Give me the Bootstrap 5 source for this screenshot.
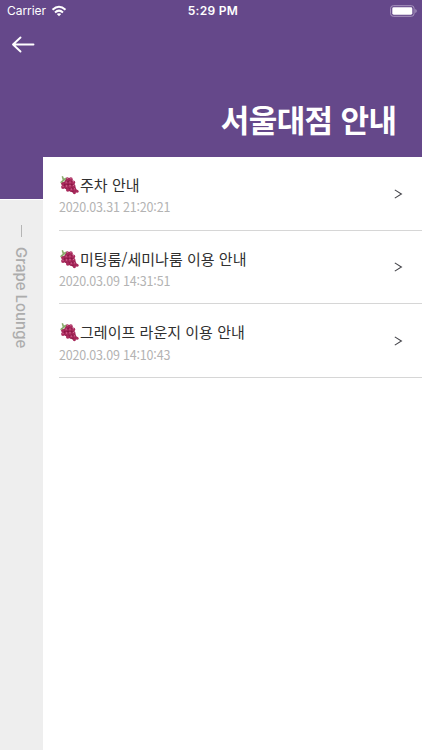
<!DOCTYPE html>
<html lang="ko">
<head>
<meta charset="utf-8">
<meta name="viewport" content="width=device-width, initial-scale=1">
<title>서울대점 안내</title>
<link href="https://cdn.jsdelivr.net/npm/bootstrap@5.3.0/dist/css/bootstrap.min.css" rel="stylesheet">
<style>
  body { font-family: "Noto Sans CJK KR", sans-serif; color: #303030; }
  .app-header { height: 157px; background: #65488a; }
  .status-bar { height: 22px; font-family: Inter, sans-serif; font-size: 12px; line-height: 22px; padding: 0 5px 0 7px; }
  .status-side { flex: 1 1 0; }
  .carrier { letter-spacing: -.04px; }
  .wifi { margin-left: 5px; }
  .clock { letter-spacing: .3px; padding-left: 2px; }
  .back-btn { margin: 13px 0 0 11px; width: 24px; height: 20px; }
  .page-title { font-size: 31px; line-height: 40px; font-weight: 700; letter-spacing: -.6px; padding: 0 25.6px 18px 0; }
  .side-rail { width: 43px; background: #eee; }
  .rail-top { height: 43px; background: #65488a; border-bottom: 1px solid #fff; }
  .rail-line { width: 1px; height: 12px; background: #b5b5b5; margin: 25px 0 10px 21px; }
  .rail-text { writing-mode: vertical-rl; font-family: Inter, sans-serif; font-size: 15px; line-height: 18px; font-weight: 500; color: #acacac; margin-left: 12px; letter-spacing: 0; }
  .notice { height: 73.6px; margin-left: 16px; border-bottom: 1px solid #d6d6d6; color: inherit; }
  .notice-title { font-size: 15px; line-height: 22px; letter-spacing: .03px; padding-top: 17px; }
  .notice-date { font-size: 12.5px; line-height: 18px; letter-spacing: -.18px; color: #b3b3b3; margin-top: 2.4px; }
  .grape { width: 20px; height: 20px; margin-right: 1px; }
  .chevron { width: 10px; height: 12px; margin: 1px 19px 0 0; }
</style>
<script src="https://cdn.jsdelivr.net/npm/bootstrap@5.3.0/dist/js/bootstrap.bundle.min.js"></script>
</head>
<body class="bg-white">
<svg class="d-none">
  <symbol id="grapes" viewBox="0 0 20 20">
    <path d="M3.5 10L7 4L11 3L14 6L16 11L18 16L15 18L10 16L5 13Z" fill="#841442"/>
    <g fill="#a82a5c"><circle cx="3.8" cy="8.6" r="1.8"/><circle cx="8.3" cy="4.2" r="1.9"/><circle cx="11.8" cy="4.2" r="1.9"/><circle cx="7.2" cy="7.8" r="1.9"/><circle cx="11" cy="7.8" r="1.9"/><circle cx="14.3" cy="7.4" r="1.9"/><circle cx="4" cy="12" r="1.9"/><circle cx="7.5" cy="11.7" r="1.9"/><circle cx="11" cy="11.5" r="1.9"/><circle cx="14.6" cy="11.1" r="1.9"/><circle cx="8.8" cy="14.9" r="1.8"/><circle cx="12.3" cy="14.9" r="1.8"/><circle cx="15.6" cy="14.5" r="1.8"/><circle cx="18.1" cy="16.2" r="1.5"/><circle cx="15.4" cy="17.6" r="1.6"/></g>
    <g fill="#d4709a"><circle cx="8.4" cy="3.5" r=".6"/><circle cx="11.9" cy="3.6" r=".6"/><circle cx="7.2" cy="7.1" r=".7"/><circle cx="11" cy="7.1" r=".7"/><circle cx="14.4" cy="6.7" r=".6"/><circle cx="4" cy="11.3" r=".6"/><circle cx="7.5" cy="11" r=".7"/><circle cx="11" cy="10.8" r=".7"/><circle cx="14.6" cy="10.4" r=".6"/><circle cx="12.3" cy="14.2" r=".6"/><circle cx="15.6" cy="13.8" r=".6"/></g>
    <path d="M2.6 1.6L4 1L5 3.6Q6.5 2.3 7.6 3Q6.8 5.4 5 6Q3.8 8 1.2 8.2Q1 6.2 3.6 5Z" fill="#8aab6c"/>
  </symbol>
  <symbol id="chevron" viewBox="0 0 10 12"><path d="M1.8 1.9L8.4 6L1.8 10.1" fill="none" stroke="#44444a" stroke-width="1.1"/></symbol>
</svg>
<div class="d-flex flex-column vh-100 overflow-hidden">
  <header class="app-header text-white d-flex flex-column flex-shrink-0">
    <div class="status-bar d-flex align-items-center">
      <div class="status-side d-flex align-items-center">
        <span class="carrier">Carrier</span>
        <svg class="wifi" width="16" height="12" viewBox="0 0 16 12" fill="none" stroke="#fff" stroke-width="2"><path d="M1.5 4.8Q8 -1.2 14.5 4.8M4 7.4Q8 3.8 12 7.4"/><path d="M5.8 9Q8 7.3 10.2 9L8 11.3Z" fill="#fff" stroke="none"/></svg>
      </div>
      <span class="clock fw-semibold">5:29 PM</span>
      <div class="status-side d-flex justify-content-end">
        <svg width="27" height="12" viewBox="0 0 27 12"><rect x=".6" y=".7" width="23.5" height="10.6" rx="2.7" fill="none" stroke="#a997bf"/><rect x="2.3" y="2.3" width="20" height="7.4" rx="1.4" fill="#fff"/><path d="M25.3 4Q26.7 4.5 26.7 6T25.3 8Z" fill="#a997bf"/></svg>
      </div>
    </div>
    <a href="#" class="back-btn d-block" aria-label="뒤로"><svg class="d-block" width="24" height="20" viewBox="0 0 24 20" fill="none" stroke="#fff" stroke-width="1.9" stroke-linecap="round" stroke-linejoin="round"><path d="M22.5 9.5H2M9.5 2.5L2 9.5L9.5 16.5"/></svg></a>
    <h1 class="page-title text-end mt-auto mb-0">서울대점 안내</h1>
  </header>
  <div class="d-flex flex-grow-1">
    <aside class="side-rail flex-shrink-0">
      <div class="rail-top"></div>
      <div class="rail-line"></div>
      <div class="rail-text">Grape Lounge</div>
    </aside>
    <main class="flex-grow-1">
      <a href="#" class="notice d-flex align-items-center text-decoration-none">
        <div class="flex-grow-1 align-self-start"><div class="notice-title d-flex align-items-center"><svg class="grape"><use href="#grapes"/></svg>주차 안내</div><div class="notice-date">2020.03.31 21:20:21</div></div>
        <svg class="chevron"><use href="#chevron"/></svg>
      </a>
      <a href="#" class="notice d-flex align-items-center text-decoration-none">
        <div class="flex-grow-1 align-self-start"><div class="notice-title d-flex align-items-center"><svg class="grape"><use href="#grapes"/></svg>미팅룸/세미나룸 이용 안내</div><div class="notice-date">2020.03.09 14:31:51</div></div>
        <svg class="chevron"><use href="#chevron"/></svg>
      </a>
      <a href="#" class="notice d-flex align-items-center text-decoration-none">
        <div class="flex-grow-1 align-self-start"><div class="notice-title d-flex align-items-center"><svg class="grape"><use href="#grapes"/></svg>그레이프 라운지 이용 안내</div><div class="notice-date">2020.03.09 14:10:43</div></div>
        <svg class="chevron"><use href="#chevron"/></svg>
      </a>
    </main>
  </div>
</div>
</body>
</html>
